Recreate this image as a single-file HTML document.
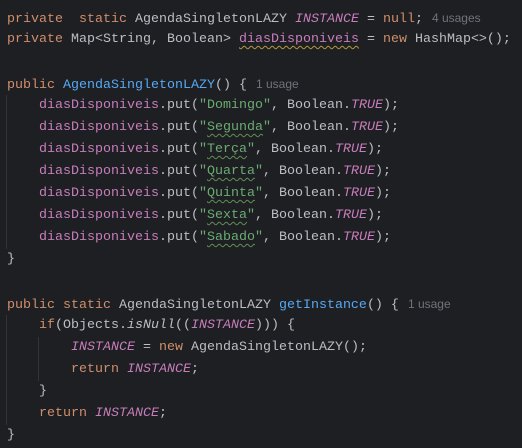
<!DOCTYPE html>
<html><head><meta charset="utf-8"><style>
html,body{margin:0;padding:0;background:#1e1f22;width:522px;height:448px;overflow:hidden}
.c{position:absolute;left:7px;top:7px;font-family:"Liberation Mono",monospace;font-size:13.33px;color:#bcbec4}
.l{height:22px;line-height:22px;white-space:pre}
.k{color:#cf8e6d}.f{color:#c77dbb}.fi{color:#c77dbb;font-style:italic}.s{color:#6aab73}.m{color:#56a8f5}.i{font-style:italic}
.w{text-decoration:underline wavy #b39a3c;text-decoration-thickness:1px;text-underline-offset:3px}
.ws{text-decoration:underline wavy #5f8f55;text-decoration-thickness:1px;text-underline-offset:3px}
.h{font-family:"Liberation Sans",sans-serif;font-size:12px;color:#6f737a;margin-left:9px}
.g{position:absolute;width:1px;background:#313438}
</style></head><body>
<div class="g" style="left:6px;top:95px;height:154px"></div>
<div class="g" style="left:6px;top:315px;height:110px"></div>
<div class="g" style="left:38px;top:337px;height:44px"></div>
<div class="c"><div class="l"><span class="k">private  static</span> AgendaSingletonLAZY <span class="fi">INSTANCE</span> = <span class="k">null</span>;<span class="h">4 usages</span></div><div class="l"><span class="k">private</span> Map&lt;String, Boolean&gt; <span class="f w">diasDisponiveis</span> = <span class="k">new</span> HashMap&lt;&gt;();</div><div class="l"> </div><div class="l"><span class="k">public</span> <span class="m">AgendaSingletonLAZY</span>() {<span class="h">1 usage</span></div><div class="l">    <span class="f">diasDisponiveis</span>.put(<span class="s">"Domingo"</span>, Boolean.<span class="fi">TRUE</span>);</div><div class="l">    <span class="f">diasDisponiveis</span>.put(<span class="s">"<span class="ws">Segunda</span>"</span>, Boolean.<span class="fi">TRUE</span>);</div><div class="l">    <span class="f">diasDisponiveis</span>.put(<span class="s">"<span class="ws">Terça</span>"</span>, Boolean.<span class="fi">TRUE</span>);</div><div class="l">    <span class="f">diasDisponiveis</span>.put(<span class="s">"<span class="ws">Quarta</span>"</span>, Boolean.<span class="fi">TRUE</span>);</div><div class="l">    <span class="f">diasDisponiveis</span>.put(<span class="s">"<span class="ws">Quinta</span>"</span>, Boolean.<span class="fi">TRUE</span>);</div><div class="l">    <span class="f">diasDisponiveis</span>.put(<span class="s">"<span class="ws">Sexta</span>"</span>, Boolean.<span class="fi">TRUE</span>);</div><div class="l">    <span class="f">diasDisponiveis</span>.put(<span class="s">"<span class="ws">Sabado</span>"</span>, Boolean.<span class="fi">TRUE</span>);</div><div class="l">}</div><div class="l"> </div><div class="l"><span class="k">public static</span> AgendaSingletonLAZY <span class="m">getInstance</span>() {<span class="h">1 usage</span></div><div class="l">    <span class="k">if</span>(Objects.<span class="i">isNull</span>((<span class="fi">INSTANCE</span>))) {</div><div class="l">        <span class="fi">INSTANCE</span> = <span class="k">new</span> AgendaSingletonLAZY();</div><div class="l">        <span class="k">return</span> <span class="fi">INSTANCE</span>;</div><div class="l">    }</div><div class="l">    <span class="k">return</span> <span class="fi">INSTANCE</span>;</div><div class="l">}</div></div>
</body></html>
